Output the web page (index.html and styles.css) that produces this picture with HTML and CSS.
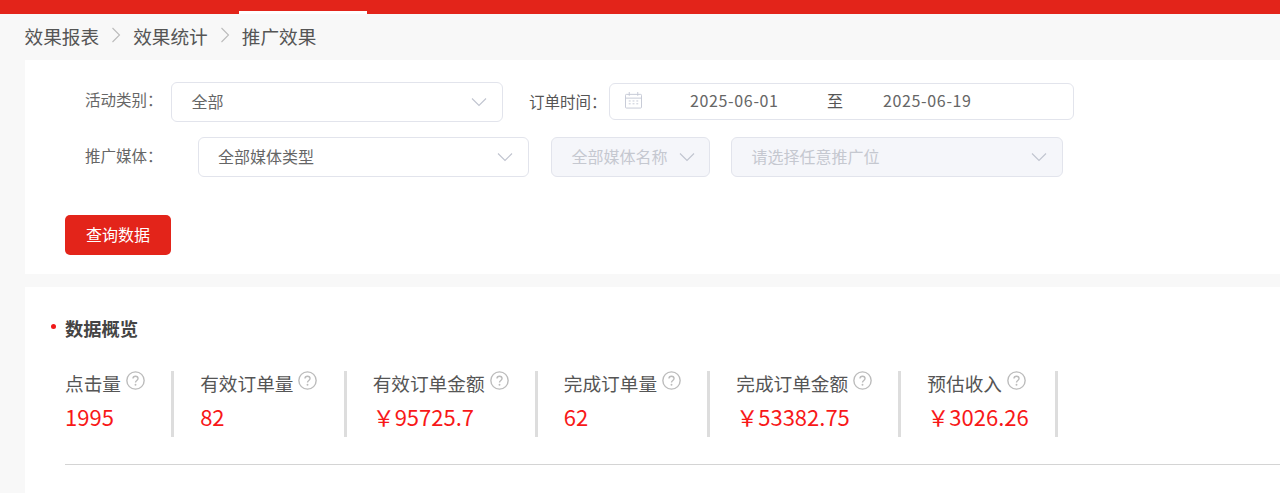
FILE: index.html
```html
<!DOCTYPE html>
<html lang="zh-CN">
<head>
<meta charset="utf-8">
<title>推广效果</title>
<link rel="stylesheet" href="styles.css">
</head>
<body>
<svg class="defs" width="0" height="0" aria-hidden="true">
  <symbol id="chev" viewBox="0 0 16 10"><path d="M1 1.5 8 8.5 15 1.5" fill="none" stroke="currentColor" stroke-width="1.1"/></symbol>
  <symbol id="help" viewBox="0 0 18 18"><circle cx="9" cy="9" r="8.2" fill="none" stroke="#bbb" stroke-width="1.3"/><path d="M6.6 7.2C6.6 5.8 7.6 5 9 5s2.4.8 2.4 2.1c0 1.9-2.4 1.9-2.4 3.9" fill="none" stroke="#bbb" stroke-width="1.3"/><circle cx="9" cy="13" r=".9" fill="#bbb"/></symbol>
</svg>
<header class="topbar"><div class="tab"></div></header>
<nav class="crumbs">
  <span>效果报表</span>
  <svg class="sep" viewBox="0 0 10 16"><path d="M1.5 1 8.5 8 1.5 15" fill="none" stroke="#bbb" stroke-width="1.1"/></svg>
  <span>效果统计</span>
  <svg class="sep" viewBox="0 0 10 16"><path d="M1.5 1 8.5 8 1.5 15" fill="none" stroke="#bbb" stroke-width="1.1"/></svg>
  <span>推广效果</span>
</nav>
<section class="card filter">
  <div class="row row-a">
    <label class="lbl lbl-a">活动类别：</label>
    <div class="select s-a"><span>全部</span><svg class="chev"><use href="#chev"/></svg></div>
    <label class="lbl lbl-b">订单时间：</label>
    <div class="date">
      <svg class="cal" viewBox="0 0 18 18" fill="none" stroke="#c4c8d4" stroke-width="1"><rect x=".5" y="2.5" width="17" height="14.5" rx="1"/><path d="M.5 6.5h17M4.5 0v4M13.5 0v4"/><path d="M4 9.5h2M8 9.5h2M12 9.5h2M4 12.5h2M8 12.5h2M12 12.5h2"/></svg>
      <span class="d1">2025-06-01</span><span class="to">至</span><span class="d2">2025-06-19</span>
    </div>
  </div>
  <div class="row row-b">
    <label class="lbl lbl-c">推广媒体：</label>
    <div class="select s-b"><span>全部媒体类型</span><svg class="chev"><use href="#chev"/></svg></div>
    <div class="select off s-c"><span>全部媒体名称</span><svg class="chev"><use href="#chev"/></svg></div>
    <div class="select off s-d"><span>请选择任意推广位</span><svg class="chev"><use href="#chev"/></svg></div>
  </div>
  <button class="btn" type="button">查询数据</button>
</section>
<section class="card overview">
  <h2 class="title">数据概览</h2>
  <div class="stats">
    <div class="stat first"><div class="name">点击量<svg class="help"><use href="#help"/></svg></div><div class="val">1995</div></div>
    <div class="stat"><div class="name">有效订单量<svg class="help"><use href="#help"/></svg></div><div class="val">82</div></div>
    <div class="stat"><div class="name">有效订单金额<svg class="help"><use href="#help"/></svg></div><div class="val">￥95725.7</div></div>
    <div class="stat"><div class="name">完成订单量<svg class="help"><use href="#help"/></svg></div><div class="val">62</div></div>
    <div class="stat"><div class="name">完成订单金额<svg class="help"><use href="#help"/></svg></div><div class="val">￥53382.75</div></div>
    <div class="stat"><div class="name">预估收入<svg class="help"><use href="#help"/></svg></div><div class="val">￥3026.26</div></div>
  </div>
  <div class="rule"></div>
</section>
</body>
</html>
```
FILE: styles.css
```css
* { box-sizing: border-box; }
html, body { margin: 0; height: 493px; overflow: hidden; }
body { background: #f8f8f8; font-family: "Noto Sans CJK SC", "Noto Sans", sans-serif; color: #555; }
.defs { display: block; height: 0; }
.topbar { height: 14px; background: #e3241a; display: flex; align-items: flex-end; padding-left: 239px; }
.tab { width: 128px; height: 3px; background: #fff; }
.crumbs { height: 46px; padding: 0 0 4px 24.5px; display: flex; align-items: center; font-size: 18.67px; color: #555; gap: 12px; }
.sep { width: 10px; height: 16px; }
.card { background: #fff; margin-left: 25px; }
.filter { height: 214px; padding: 22px 0 0 40px; }
.row { display: flex; }
.row-a { height: 40px; align-items: flex-start; }
.row-b { height: 40px; margin-top: 15px; align-items: flex-start; }
.lbl { font-size: 15.5px; color: #666; line-height: 34px; white-space: nowrap; }
.lbl-a { margin-left: 20px; width: 86px; }
.lbl-b { margin-left: 26px; width: 80px; color: #555; line-height: 38px; }
.lbl-c { margin-left: 20px; width: 112.5px; line-height: 36px; }
.select { height: 40px; border: 1px solid #e2e4ec; border-radius: 6px; padding: 0 15px 3px 19.5px; display: flex; align-items: center; justify-content: space-between; font-size: 16px; color: #666; background: #fff; }
.chev { width: 16px; height: 10px; color: #c0c4cf; flex: none; margin-top: 3px; }
.s-a { width: 332px; }
.s-b { width: 331.5px; }
.s-c { width: 159px; margin-left: 22px; padding-right: 14px; }
.s-d { width: 332px; margin-left: 21px; }
.off { background: #f5f6fa; color: #c5c8d0; }
.date { width: 465px; height: 37px; margin-top: 1px; border: 1px solid #e2e4ec; border-radius: 6px; padding: 0 0 3px 15px; display: flex; align-items: center; font-size: 16px; color: #666; }
.cal { width: 17px; height: 17px; flex: none; }
.d1 { margin-left: 48px; width: 137px; letter-spacing: .65px; }
.to { width: 56px; color: #555; }
.d2 { letter-spacing: .65px; }
.btn { display: block; width: 106px; height: 40px; margin: 38px 0 0; border: 0; border-radius: 5px; background: #e3241a; color: #fff; font: inherit; font-size: 16px; padding: 0 0 3px; }
.overview { margin-top: 13px; height: 206px; padding: 0 0 0 40px; }
.title { margin: 0; padding-top: 28px; height: 84px; font-size: 18.3px; line-height: 26px; font-weight: 700; color: #444; position: relative; }
.title::before { content: ""; position: absolute; left: -14px; top: 37px; width: 5px; height: 5px; border-radius: 50%; background: #f01818; }
.stats { display: flex; height: 66px; }
.stat { padding: 0 26.2px 0 26px; border-right: 3px solid #ddd; height: 66px; }
.stat.first { padding-left: 0; }
.name { font-size: 18.67px; line-height: 26px; color: #555; white-space: nowrap; display: flex; margin-top: -1px; }
.help { width: 19px; height: 19px; margin: 1px 0 0 5px; flex: none; }
.val { font-size: 22px; line-height: 30px; margin-top: 5px; color: #f81818; white-space: nowrap; }
.rule { height: 1px; background: #d4d4d4; margin-top: 27px; }
```
